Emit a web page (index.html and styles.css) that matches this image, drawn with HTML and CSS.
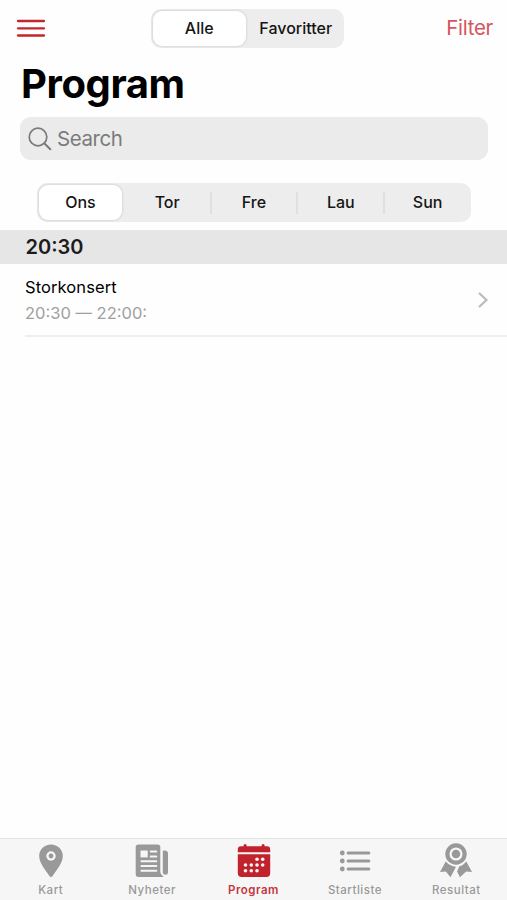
FILE: index.html
```html
<!DOCTYPE html>
<html lang="no">
  <head>
    <meta charset="UTF-8" />
    <meta name="viewport" content="width=device-width, initial-scale=1.0" />
    <title>Program</title>
    <link rel="stylesheet" href="styles.css">
  </head>
  <body>
    <header class="navbar">
      <button class="menu-btn" aria-label="Meny">
        <svg width="30" height="20" viewBox="0 0 30 20">
          <path d="M2 3H28M2 10.3H28M2 17.5H28" fill="none" stroke="#c1272d" stroke-width="2.3" stroke-linecap="round" />
        </svg>
      </button>
      <div class="segmented segmented-top">
        <button class="segment active">Alle</button>
        <button class="segment favorites">Favoritter</button>
      </div>
      <button class="filter-btn">Filter</button>
    </header>

    <h1><span class="title-text">Program</span></h1>

    <div class="search">
      <svg width="24" height="24" viewBox="0 0 24 24">
        <path d="M16.5 16.5L22.3 22.3" fill="none" stroke="#7b7b7b" stroke-width="2" stroke-linecap="round" />
        <circle cx="10" cy="10" r="8.8" fill="none" stroke="#7b7b7b" stroke-width="1.7" />
      </svg>
      <span class="search-text">Search</span>
    </div>

    <div class="segmented segmented-days">
      <button class="segment active">Ons</button>
      <button class="segment">Tor</button>
      <button class="segment divided">Fre</button>
      <button class="segment divided">Lau</button>
      <button class="segment divided">Sun</button>
    </div>

    <main>
      <h2><span class="hour">20:30</span></h2>
      <div class="event">
        <div class="event-info">
          <p><span class="event-name">Storkonsert</span></p>
          <p><span class="event-time">20:30 — 22:00:</span></p>
        </div>
        <svg width="12" height="18" viewBox="0 0 12 18">
          <path d="M2 2L9.500 9L2 16" fill="none" stroke="#b9b9b9" stroke-width="2.1" />
        </svg>
      </div>
    </main>

    <nav class="tabbar">
      <a class="tab">
        <svg width="36" height="36" viewBox="0 0 36 36">
          <path d="M18 1.5C11.4 1.5 6.2 6.6 6.2 12.8C6.2 20 11.5 25.5 16.4 33C17.2 34.3 18.8 34.3 19.6 33C24.5 25.5 29.8 20 29.8 12.8C29.8 6.6 24.6 1.5 18 1.5Z" />
          <circle class="cutout" cx="18" cy="13" r="4.7" />
          <circle cx="18" cy="13" r="2.4" />
        </svg>
        <span>Kart</span>
      </a>
      <a class="tab">
        <svg width="36" height="36" viewBox="0 0 36 36">
          <path d="M4.5 1.5H23.5Q26.3 1.5 26.3 4.3V29Q26.3 31.5 29.7 33.9H4.5Q1.7 33.9 1.7 31V4.3Q1.7 1.5 4.5 1.5Z" />
          <path d="M28.8 7.5H30.5Q34 7.5 34 10.5V29.5Q34 31.8 31.5 31.8Q28.8 31.8 28.8 29Z" />
          <path class="cutout" d="M6.5 7.5H13.7V14.4H6.5Z" />
          <path class="cutout-line" d="M16.7 8.5H22.3M16.7 13.4H22.3M7.4 18.2H22.3M7.4 23H22.3M7.4 27.8H22.3" />
        </svg>
        <span>Nyheter</span>
      </a>
      <a class="tab active">
        <svg width="36" height="36" viewBox="0 0 36 36">
          <path d="M5 3.2H7.6V2.5Q7.6 1 9.1 1Q10.6 1 10.6 2.5V3.2H25.6V2.5Q25.6 1 27.1 1Q28.6 1 28.6 2.5V3.2H31Q34.2 3.2 34.2 6.4V9.3H1.8V6.4Q1.8 3.2 5 3.2Z" />
          <path d="M1.8 11.2H34.2V30Q34.2 33.9 30.4 33.9H5.6Q1.8 33.9 1.8 30Z" />
          <g class="cutout">
            <circle cx="21" cy="16.3" r="1.8" /><circle cx="26.7" cy="16.3" r="1.8" />
            <circle cx="9.5" cy="22" r="1.8" /><circle cx="15.3" cy="22" r="1.8" />
            <circle cx="21" cy="22" r="1.8" /><circle cx="26.7" cy="22" r="1.8" />
            <circle cx="9.5" cy="27.7" r="1.8" /><circle cx="15.3" cy="27.7" r="1.8" />
            <circle cx="21" cy="27.7" r="1.8" />
          </g>
        </svg>
        <span>Program</span>
      </a>
      <a class="tab">
        <svg width="36" height="36" viewBox="0 0 36 36">
          <circle cx="5.3" cy="10" r="2.4" /><circle cx="5.3" cy="18" r="2.4" /><circle cx="5.3" cy="26" r="2.4" />
          <path class="list-line" d="M11.2 10H31.8M11.2 18H31.8M11.2 26H31.8" />
        </svg>
        <span>Startliste</span>
      </a>
      <a class="tab">
        <svg width="36" height="36" viewBox="0 0 36 36">
          <path d="M7.700 18.5L2 29L7.900 28.6L12.500 34.3L18 23.8Q11.700 23 7.700 18.5Z" />
          <path d="M28.300 18.5L34 29L28.100 28.6L22 34.3L19.100 28.6L21.200 23.6Q25.500 22.3 28.300 18.5Z" />
          <circle cx="18" cy="11" r="10.7" />
          <circle class="cutout-ring" cx="18" cy="11" r="5.4" />
        </svg>
        <span>Resultat</span>
      </a>
    </nav>
  </body>
</html>
```

FILE: styles.css
```css
* {
    margin: 0;
    padding: 0;
    box-sizing: border-box;
}

body {
    display: flex;
    flex-direction: column;
    height: 100vh;
    font-family: Inter, sans-serif;
    background-color: #fefefe;
    color: #000;
}

button {
    border: none;
    background: none;
    font-family: inherit;
    color: inherit;
}

svg {
    display: block;
    flex-shrink: 0;
}

.navbar {
    display: grid;
    grid-template-columns: 135px 193px 1fr;
    align-items: center;
    height: 56px;
    padding: 0 14px 0 16px;
}

.menu-btn {
    justify-self: start;
}

.filter-btn {
    justify-self: end;
    padding-bottom: 1px;
    font-size: 20.5px;
    letter-spacing: -0.3px;
    color: #d5555b;
}

.segmented {
    display: grid;
    grid-auto-flow: column;
    grid-auto-columns: 1fr;
    background-color: #ededed;
    border-radius: 10px;
    padding: 2px 0;
}

.segment {
    position: relative;
    border-radius: 9px;
    font-size: 16px;
    font-weight: 500;
    color: #151515;
}

.segment.active {
    margin: 0 2px;
    background-color: #fff;
    box-shadow: 0 0 2px 1px rgba(0, 0, 0, 0.09);
}

.segment.divided::before {
    content: "";
    position: absolute;
    left: -1px;
    top: 7px;
    bottom: 6px;
    width: 2px;
    background-color: #dfdfdf;
}

.segmented-top {
    height: 39px;
}

h1 {
    height: 61px;
    padding: 3px 21px 0;
    font-size: 40px;
    line-height: 50px;
    font-weight: 700;
    letter-spacing: -0.4px;
}

.search {
    display: flex;
    align-items: center;
    gap: 5px;
    height: 43px;
    margin: 0 19px 0 20px;
    padding-left: 8px;
    background-color: #ebebeb;
    border-radius: 11px;
    font-size: 20.5px;
    letter-spacing: -0.45px;
    color: #7b7b7b;
}

.segmented-days {
    height: 39px;
    margin: 23px 36px 8px 37px;
}

.segmented-days .segment {
    padding-bottom: 1px;
}

h2 {
    height: 34px;
    padding-left: 25.5px;
    background-color: #e6e6e6;
    font-size: 20px;
    line-height: 34px;
    font-weight: 600;
    color: #1c1c1c;
}

.event {
    display: flex;
    align-items: center;
    justify-content: space-between;
    height: 73px;
    margin-left: 25px;
    padding-right: 18px;
    border-bottom: 2px solid #efefef;
}

.event-info {
    font-size: 16.5px;
    line-height: 26px;
}

.event-name {
    letter-spacing: 0.1px;
}

.event-time {
    color: #a0a0a0;
}

.tabbar {
    display: flex;
    height: 62px;
    margin-top: auto;
    border-top: 1px solid #e3e3e3;
    background-color: #f6f6f6;
}

.tab {
    display: flex;
    flex: 1;
    flex-direction: column;
    align-items: center;
    padding-top: 4px;
    font-size: 11.5px;
    line-height: 14px;
    font-weight: 500;
    letter-spacing: 0.5px;
    color: #999;
    fill: #999;
}

.tab span {
    margin-top: 4px;
}

.tab.active {
    color: #c5353d;
    fill: #c1222c;
    font-weight: 600;
}

.cutout {
    fill: #f6f6f6;
}

.cutout-line {
    fill: none;
    stroke: #f6f6f6;
    stroke-width: 2;
    stroke-linecap: round;
}

.cutout-ring {
    fill: none;
    stroke: #f6f6f6;
    stroke-width: 2.3;
}

.list-line {
    stroke: #999;
    stroke-width: 3.2;
    stroke-linecap: round;
}
```
